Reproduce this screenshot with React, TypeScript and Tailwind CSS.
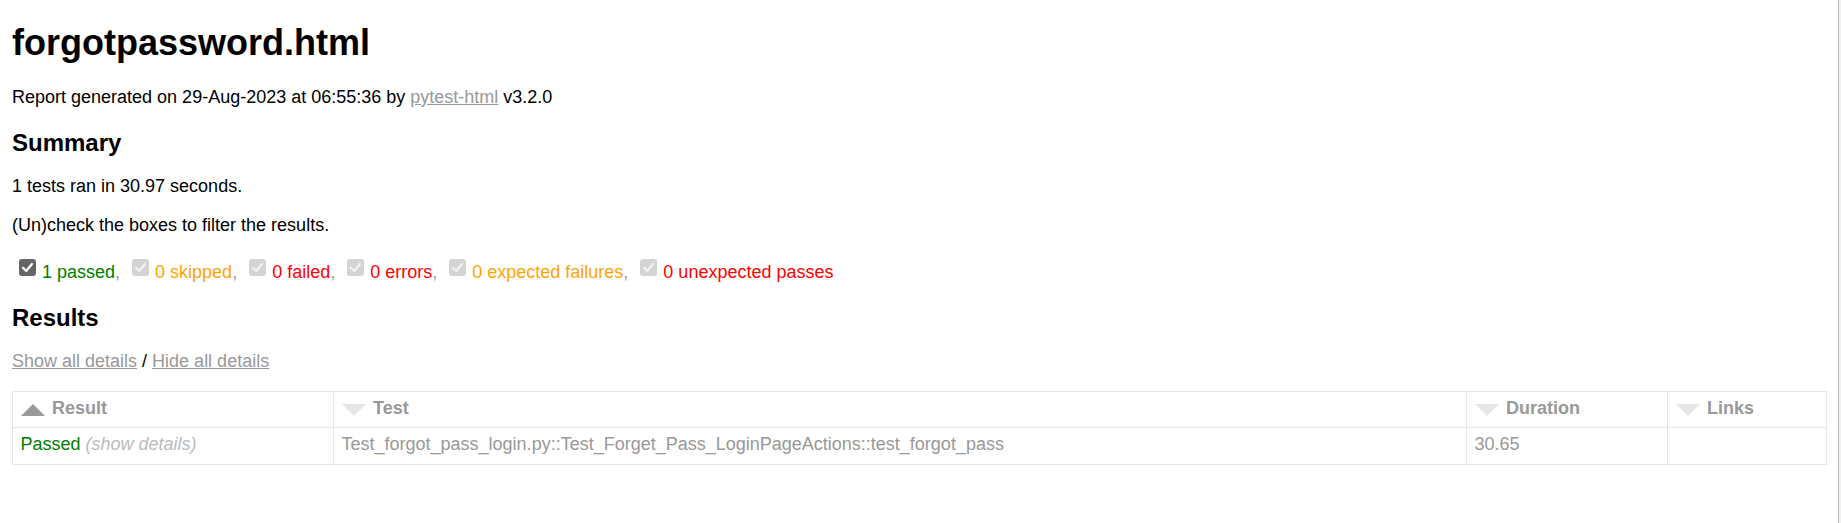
const FILTERS = [
  { label: '1 passed', color: 'text-[#008000]', enabled: true },
  { label: '0 skipped', color: 'text-[#ffa500]', enabled: false },
  { label: '0 failed', color: 'text-[#ff0000]', enabled: false },
  { label: '0 errors', color: 'text-[#ff0000]', enabled: false },
  { label: '0 expected failures', color: 'text-[#ffa500]', enabled: false },
  { label: '0 unexpected passes', color: 'text-[#ff0000]', enabled: false },
]

function CheckBox({ enabled }: { enabled: boolean }) {
  return (
    <span
      className={`ml-[7px] mr-[6px] inline-block h-[17px] w-[17px] overflow-hidden rounded-[3px] align-[2px] ${
        enabled ? 'bg-[#666666]' : 'bg-[#d4d4d4]'
      }`}
    >
      <svg viewBox="0 0 17 17" className="block h-[17px] w-[17px]">
        <path
          d="M4 8.8 L7.2 12 L13 5"
          fill="none"
          stroke={enabled ? '#ffffff' : '#f2f2f2'}
          strokeWidth="2.2"
          strokeLinecap="round"
          strokeLinejoin="round"
        />
      </svg>
    </span>
  )
}

function SortIcon({ active }: { active?: boolean }) {
  return active ? (
    <span className="float-left mr-[7.5px] mt-[6px] h-0 w-0 border-x-[12px] border-b-[12px] border-x-transparent border-b-[#999999]" />
  ) : (
    <span className="float-left mr-[7.5px] mt-[6px] h-0 w-0 border-x-[12px] border-t-[12px] border-x-transparent border-t-[#e6e6e6]" />
  )
}

const cell = 'border border-[#e6e6e6] px-[7.5px] pt-[6px] align-top'

export default function App() {
  return (
    <div className="flex h-[523px] w-full overflow-hidden bg-white font-['Liberation_Sans',Arial,sans-serif] text-[#999999]">
      <div className="w-[1838px] shrink-0 px-[12px]">
        <h1 className="mt-[22px] text-[36px] font-bold leading-[41px] text-black">forgotpassword.html</h1>
        <p className="mt-[24px] text-[18px] leading-[21px] text-black">
          Report generated on 29-Aug-2023 at 06:55:36 by{' '}
          <a className="text-[#999999] underline">pytest-html</a> v3.2.0
        </p>

        <h2 className="mt-[21px] text-[24px] font-bold leading-[28px] text-black">Summary</h2>
        <p className="mt-[19px] text-[18px] leading-[21px] text-black">1 tests ran in 30.97 seconds. </p>
        <p className="mt-[18px] text-[18px] leading-[21px] text-black">(Un)check the boxes to filter the results.</p>

        <div className="mt-[23px] h-[24px] whitespace-nowrap text-[18px] leading-[21px]">
          {FILTERS.map((f, i) => (
            <span key={f.label}>
              <CheckBox enabled={f.enabled} />
              <span className={f.color}>{f.label}</span>
              {i < FILTERS.length - 1 && ', '}
            </span>
          ))}
        </div>

        <h2 className="mt-[21px] text-[24px] font-bold leading-[28px] text-black">Results</h2>
        <p className="mt-[19px] text-[18px] leading-[21px] text-black">
          <a className="text-[#999999] underline">Show all details</a>&nbsp;/&nbsp;
          <a className="text-[#999999] underline">Hide all details</a>
        </p>

        <table className="mt-[19px] w-full table-fixed border-collapse border border-[#e6e6e6] text-left text-[18px] leading-[21px] text-[#999999]">
          <colgroup>
            <col className="w-[321px]" />
            <col className="w-[1133px]" />
            <col className="w-[201px]" />
            <col className="w-[159px]" />
          </colgroup>
          <thead>
            <tr className="h-[36px]">
              <th className={`${cell} font-bold`}>
                <SortIcon active />
                Result
              </th>
              <th className={`${cell} font-bold`}>
                <SortIcon />
                Test
              </th>
              <th className={`${cell} font-bold`}>
                <SortIcon />
                Duration
              </th>
              <th className={`${cell} font-bold`}>
                <SortIcon />
                Links
              </th>
            </tr>
          </thead>
          <tbody>
            <tr className="h-[37px]">
              <td className={cell}>
                <span className="text-[#008000]">Passed</span>
                <span className="italic text-[#bbbbbb]"> (show details)</span>
              </td>
              <td className={cell}>
                Test_forgot_pass_login.py::Test_Forget_Pass_LoginPageActions::test_forgot_pass
              </td>
              <td className={cell}>30.65</td>
              <td className={cell}></td>
            </tr>
          </tbody>
        </table>
      </div>
      <div className="w-[3px] shrink-0 border-l border-[#bdbdbd] bg-[#f1f1f1]" />
    </div>
  )
}
